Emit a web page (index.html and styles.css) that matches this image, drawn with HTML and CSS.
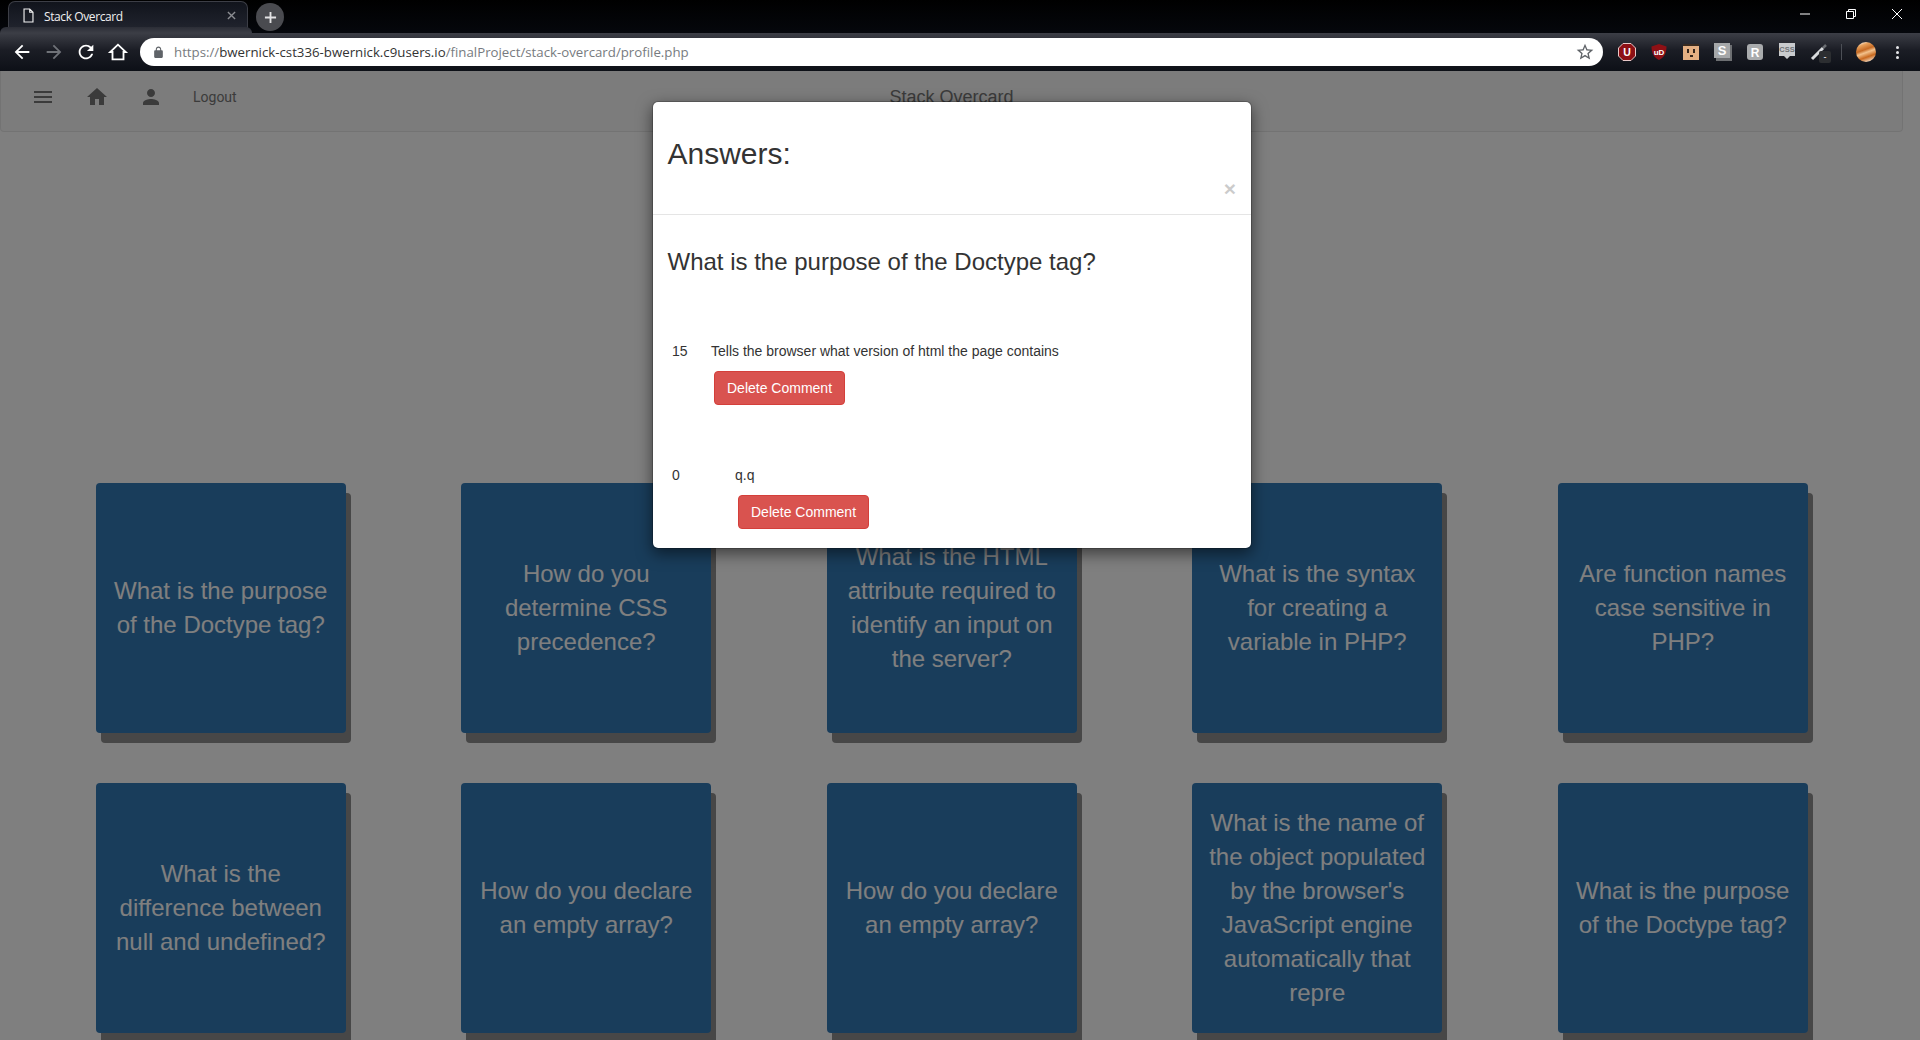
FILE: index.html
```html
<!DOCTYPE html>
<html lang="en">
<head>
    <meta charset="UTF-8">
    <meta name="viewport" content="width=device-width, initial-scale=1.0">
    <title>Stack Overcard</title>
    <link rel="stylesheet" href="styles.css">
</head>
<body>
    <!-- browser frame -->
    <div class="tabstrip">
        <div class="tab">
            <svg class="tab-icon" viewBox="0 0 16 18"><path d="M2.5 1h7l4 4v12h-11zM9.5 1v4h4" fill="none" stroke="#f2f2f2" stroke-width="1.4"/></svg>
            <span class="tab-title">Stack Overcard</span>
            <svg class="tab-close" viewBox="0 0 10 10"><path d="M1 1l8 8M9 1l-8 8" stroke="#8b8d92" stroke-width="1.5"/></svg>
        </div>
        <div class="newtab">
            <svg viewBox="0 0 14 14"><path d="M7 1v12M1 7h12" stroke="#e2e2e4" stroke-width="2"/></svg>
        </div>
        <div class="winctl">
            <svg viewBox="0 0 12 12"><path d="M1 6h10" stroke="#fff" stroke-width="1"/></svg>
            <svg viewBox="0 0 12 12"><path d="M1.5 3.5h7v7h-7zM3.5 3.5v-2h7v7h-2" fill="none" stroke="#fff" stroke-width="1"/></svg>
            <svg viewBox="0 0 12 12"><path d="M1 1l10 10M11 1l-10 10" stroke="#fff" stroke-width="1"/></svg>
        </div>
    </div>
    <div class="toolbar">
        <div class="tab-flare"></div>
        <div class="navbtns">
            <svg viewBox="0 0 24 24"><path fill="#fff" d="M20 11H7.83l5.59-5.59L12 4l-8 8 8 8 1.41-1.41L7.83 13H20v-2z"/></svg>
            <svg viewBox="0 0 24 24"><path fill="#6f7278" d="M12 4l-1.41 1.41L16.17 11H4v2h12.17l-5.58 5.59L12 20l8-8z"/></svg>
            <svg viewBox="0 0 24 24"><path fill="#fff" d="M17.65 6.35C16.2 4.9 14.21 4 12 4c-4.42 0-7.99 3.58-7.99 8s3.57 8 7.99 8c3.73 0 6.84-2.55 7.73-6h-2.08c-.82 2.33-3.04 4-5.65 4-3.31 0-6-2.69-6-6s2.69-6 6-6c1.66 0 3.14.69 4.22 1.78L13 11h7V4l-2.35 2.35z"/></svg>
            <svg viewBox="0 0 24 24"><path fill="none" stroke="#fff" stroke-width="2" d="M12 4L3.5 12H6v8h12v-8h2.500z"/></svg>
        </div>
        <div class="addressbar">
            <svg class="lock" viewBox="0 0 24 24"><path fill="#5f6368" d="M18 8h-1V6c0-2.760-2.240-5-5-5S7 3.240 7 6v2H6c-1.100 0-2 .9-2 2v10c0 1.100.9 2 2 2h12c1.100 0 2-.9 2-2V10c0-1.100-.9-2-2-2zM9 6c0-1.660 1.340-3 3-3s3 1.340 3 3v2H9V6z"/></svg>
            <span class="url"><span class="url-dim">https://</span><span class="url-host">bwernick-cst336-bwernick.c9users.io</span><span class="url-dim">/finalProject/stack-overcard/profile.php</span></span>
            <svg class="star" viewBox="0 0 24 24"><path fill="#5f6368" d="M22 9.240l-7.190-.62L12 2 9.190 8.630 2 9.240l5.460 4.730L5.820 21 12 17.270 18.180 21l-1.630-7.030L22 9.240zM12 15.400l-3.760 2.270 1-4.280-3.320-2.880 4.380-.38L12 6.100l1.710 4.040 4.380.38-3.320 2.880 1 4.280L12 15.400z"/></svg>
        </div>
        <div class="extensions">
            <svg viewBox="0 0 20 20"><path fill="#8e1015" stroke="#e9c9c9" stroke-width="1" d="M6 1.500h8l4.500 4.500v8L14 18.500H6L1.500 14V6z"/><text class="ext-text" x="10" y="14" text-anchor="middle" font-size="10.500">U</text></svg>
            <svg viewBox="0 0 20 20"><path fill="#8e1015" d="M10 2l7.500 2.500c0 7-2.500 11-7.500 13.500C5 15.500 2.500 11.500 2.500 4.500z"/><text class="ext-text" x="10" y="12.500" text-anchor="middle" font-size="8">uD</text></svg>
            <svg viewBox="0 0 20 20"><rect x="2" y="3" width="16" height="15" fill="#e5b083"/><rect x="2" y="2" width="16" height="2" fill="#3a2b20"/><rect x="6" y="7" width="2" height="4" fill="#33251b"/><rect x="12" y="7" width="2" height="4" fill="#33251b"/><rect x="9" y="13" width="3" height="2" fill="#33251b"/></svg>
            <svg viewBox="0 0 20 20"><rect x="3" y="3" width="16" height="16" fill="#6d6f72"/><rect x="1" y="1" width="16" height="15" fill="#a5a7a9"/><text class="ext-text" x="9" y="13" text-anchor="middle" font-size="13">S</text></svg>
            <svg viewBox="0 0 20 20"><rect x="2" y="2" width="16" height="16" rx="3" fill="#a9abad"/><text class="ext-text" x="10" y="14.500" text-anchor="middle" font-size="12">R</text></svg>
            <svg viewBox="0 0 20 20"><path fill="#c9cbce" d="M2 1h16v13h-5l-3 3-3-3H2z"/><text class="ext-css" x="10" y="10" text-anchor="middle" font-size="7.500">CSS</text></svg>
            <div class="ext-pen">
                <svg viewBox="0 0 20 20"><path d="M3 17L14 6" stroke="#d8dadd" stroke-width="3"/><path d="M14 6l3-3" stroke="#6b6e73" stroke-width="2.500"/></svg>
                <span class="ext-badge">-</span>
            </div>
        </div>
        <div class="toolbar-sep"></div>
        <div class="avatar"></div>
        <div class="kebab"><i></i><i></i><i></i></div>
    </div>

    <!-- page -->
    <div class="page">
        <div class="navbar">
            <div class="navbar-left">
                <svg viewBox="0 0 24 24"><path d="M3 18h18v-2H3v2zm0-5h18v-2H3v2zm0-7v2h18V6H3z"/></svg>
                <svg viewBox="0 0 24 24"><path d="M10 20v-6h4v6h5v-8h3L12 3 2 12h3v8z"/></svg>
                <svg viewBox="0 0 24 24"><path d="M12 12c2.210 0 4-1.790 4-4s-1.790-4-4-4-4 1.790-4 4 1.790 4 4 4zm0 2c-2.670 0-8 1.340-8 4v2h16v-2c0-2.660-5.330-4-8-4z"/></svg>
                <a class="logout">Logout</a>
            </div>
            <div class="brand">Stack Overcard</div>
        </div>
        <div class="cards">
            <div class="card">What is the purpose of the Doctype tag?</div>
            <div class="card">How do you determine CSS precedence?</div>
            <div class="card">What is the HTML attribute required to identify an input on the server?</div>
            <div class="card">What is the syntax for creating a variable in PHP?</div>
            <div class="card">Are function names case sensitive in PHP?</div>
            <div class="card">What is the difference between null and undefined?</div>
            <div class="card">How do you declare an empty array?</div>
            <div class="card">How do you declare an empty array?</div>
            <div class="card">What is the name of the object populated by the browser's JavaScript engine automatically that repre</div>
            <div class="card">What is the purpose of the Doctype tag?</div>
        </div>

        <div class="backdrop"></div>
        <div class="modal">
            <div class="modal-header">
                <h2>Answers:</h2>
                <button class="close">&times;</button>
            </div>
            <div class="modal-body">
                <h3>What is the purpose of the Doctype tag?</h3>
                <div class="answer first">
                    <span class="votes">15</span>
                    <div class="answer-main">
                        <div>Tells the browser what version of html the page contains</div>
                        <button class="btn-danger">Delete Comment</button>
                    </div>
                </div>
                <div class="answer second">
                    <span class="votes">0</span>
                    <div class="answer-main">
                        <div>q.q</div>
                        <button class="btn-danger">Delete Comment</button>
                    </div>
                </div>
            </div>
        </div>
    </div>
</body>
</html>
```

FILE: styles.css
```css
* {
    box-sizing: border-box;
}
body {
    margin: 0;
    height: 100vh;
    overflow: hidden;
    font-family: "Liberation Sans", Arial, sans-serif;
    font-size: 14px;
    color: #333;
    background-color: #fff;
}

/* browser frame */
.tabstrip {
    display: flex;
    height: 33px;
    background: linear-gradient(#000, #05070c);
}
.tab {
    display: flex;
    align-items: center;
    width: 240px;
    height: 27px;
    margin: 1px 0 0 8px;
    padding: 0 14px;
    background: linear-gradient(#11141c, #20232d);
    border: 1px solid #3c3e46;
    border-bottom: none;
    border-radius: 7px 7px 0 0;
}
.tab-icon {
    width: 13px;
    height: 15px;
    margin-left: -1px;
}
.tab-title {
    margin: 2px 0 0 9px;
    font-family: "Open Sans", sans-serif;
    font-size: 12px;
    letter-spacing: -0.4px;
    color: #f0f0f0;
}
.tab-close {
    width: 9px;
    height: 9px;
    margin-left: auto;
    margin-right: -3px;
}
.newtab {
    display: flex;
    align-items: center;
    justify-content: center;
    width: 28px;
    height: 28px;
    margin: 3px 0 0 8px;
    border-radius: 50%;
    background-color: #4a4b50;
}
.newtab svg {
    width: 13px;
    height: 13px;
}
.winctl {
    display: flex;
    gap: 34px;
    margin-left: auto;
    padding: 8px 17px 0 0;
}
.winctl svg {
    width: 12px;
    height: 12px;
}
.toolbar {
    position: relative;
    display: flex;
    align-items: center;
    height: 38px;
    background: linear-gradient(#3c3e46, #1b1d25 45%, #0d1017);
}
.tab-flare {
    position: absolute;
    left: 0;
    top: -6px;
    width: 252px;
    height: 6px;
    background: linear-gradient(#2b2d36, #3c3e46);
    border-radius: 6px 6px 0 0;
}
.navbtns {
    display: flex;
    gap: 10px;
    width: 140px;
    padding-left: 11px;
}
.navbtns svg {
    width: 22px;
    height: 22px;
}
.addressbar {
    display: flex;
    align-items: center;
    width: 1463px;
    height: 28px;
    padding: 0 12px 0 12px;
    background-color: #fff;
    border-radius: 14px;
}
.lock {
    width: 13px;
    height: 13px;
}
.url {
    margin-left: 9px;
    font-family: "Open Sans", sans-serif;
    font-size: 13.250px;
    color: #000;
}
.url-dim {
    color: #777b80;
}
.url-host {
    color: #333;
}
.star {
    width: 20px;
    height: 20px;
    margin-left: auto;
    margin-right: -4px;
}
.extensions {
    display: flex;
    align-items: center;
    gap: 12px;
    margin-left: 14px;
}
.extensions svg {
    display: block;
    width: 20px;
    height: 20px;
}
.ext-text {
    font-family: "Liberation Sans", sans-serif;
    font-weight: bold;
    fill: #fff;
}
.ext-css {
    font-family: "Liberation Sans", sans-serif;
    font-weight: bold;
    fill: #6f7276;
}
.ext-pen {
    position: relative;
    width: 20px;
    height: 20px;
}
.ext-badge {
    position: absolute;
    left: 10px;
    top: 9px;
    width: 12px;
    height: 12px;
    background-color: #2c2e31;
    border-radius: 2px;
    color: #fff;
    font-size: 9px;
    line-height: 12px;
    text-align: center;
}
.toolbar-sep {
    width: 1px;
    height: 16px;
    margin-left: 12px;
    background-color: #4c4f56;
}
.avatar {
    width: 20px;
    height: 20px;
    margin-left: 14px;
    border-radius: 50%;
    background: linear-gradient(160deg, #fff 5%, #e8a15c 20%, #c66a24 40%, #f3c28c 52%, #c9691f 70%, #f6e6d4 92%);
}
.kebab {
    display: flex;
    flex-direction: column;
    gap: 2px;
    margin-left: 20px;
}
.kebab i {
    width: 3px;
    height: 3px;
    border-radius: 50%;
    background-color: #e6e7e9;
}

/* page */
.page {
    position: relative;
    height: 969px;
    padding-right: 17px;
    overflow: hidden;
}
.navbar {
    position: relative;
    height: 61px;
    background-color: #f8f8f8;
    border: 1px solid #e7e7e7;
    border-top: none;
    border-radius: 0 0 4px 4px;
}
.navbar-left {
    display: flex;
    align-items: center;
    height: 52px;
    padding-left: 30px;
}
.navbar-left svg {
    width: 24px;
    height: 24px;
    margin-right: 30px;
    fill: #777;
}
.logout {
    margin: 0;
    font-family: Roboto, sans-serif;
    font-size: 14px;
    color: #777;
}
.brand {
    position: absolute;
    left: 0;
    right: 0;
    top: 16px;
    font-size: 18px;
    line-height: 20px;
    text-align: center;
    color: #777;
}
.cards {
    display: grid;
    grid-template-columns: repeat(5, 250px);
    justify-content: space-between;
    row-gap: 50px;
    padding: 352px 95.250px 0 95.750px;
    margin-top: -1px;
}
.card {
    display: flex;
    align-items: center;
    justify-content: center;
    height: 250px;
    padding: 0 15px;
    background-color: #337ab7;
    border-radius: 4px;
    box-shadow: 5px 10px 0 #8f8f8f;
    color: #fff;
    font-size: 24px;
    line-height: 34px;
    text-align: center;
}

/* answers dialog */
.backdrop {
    position: absolute;
    inset: 0;
    background-color: rgba(0, 0, 0, 0.5);
}
.modal {
    position: absolute;
    left: 652px;
    top: 30px;
    width: 600px;
    height: 448px;
    background-color: #fff;
    border: 1px solid rgba(0, 0, 0, 0.2);
    background-clip: padding-box;
    border-radius: 6px;
    box-shadow: 0 5px 15px rgba(0, 0, 0, 0.5);
}
.modal-header {
    height: 113px;
    padding: 15px 15px 15px 14.500px;
    border-bottom: 1px solid #e5e5e5;
}
h2 {
    margin: 20px 0 10px;
    font-size: 30px;
    font-weight: 500;
    line-height: 33px;
}
.close {
    float: right;
    margin-top: -2px;
    padding: 0;
    border: none;
    background: none;
    font-family: "Liberation Sans", sans-serif;
    font-size: 21px;
    font-weight: bold;
    line-height: 21px;
    color: #000;
    opacity: 0.2;
}
.modal-body {
    padding: 15px 15px 15px 14.500px;
}
h3 {
    margin: 19px 0 10px;
    font-size: 24px;
    font-weight: 500;
    line-height: 26.400px;
}
.answer {
    display: flex;
    padding-left: 4.500px;
    line-height: 20px;
}
.answer.first {
    margin-top: 66px;
}
.answer.second {
    margin-top: 60px;
}
.votes {
    width: 39px;
}
.answer.second .votes {
    width: 63px;
}
.btn-danger {
    display: block;
    height: 34px;
    margin: 10px 0 0 3px;
    padding: 6px 12px;
    background-color: #d9534f;
    border: 1px solid #d43f3a;
    border-radius: 4px;
    color: #fff;
    font-family: "Liberation Sans", sans-serif;
    font-size: 14px;
    line-height: 20px;
}
```
